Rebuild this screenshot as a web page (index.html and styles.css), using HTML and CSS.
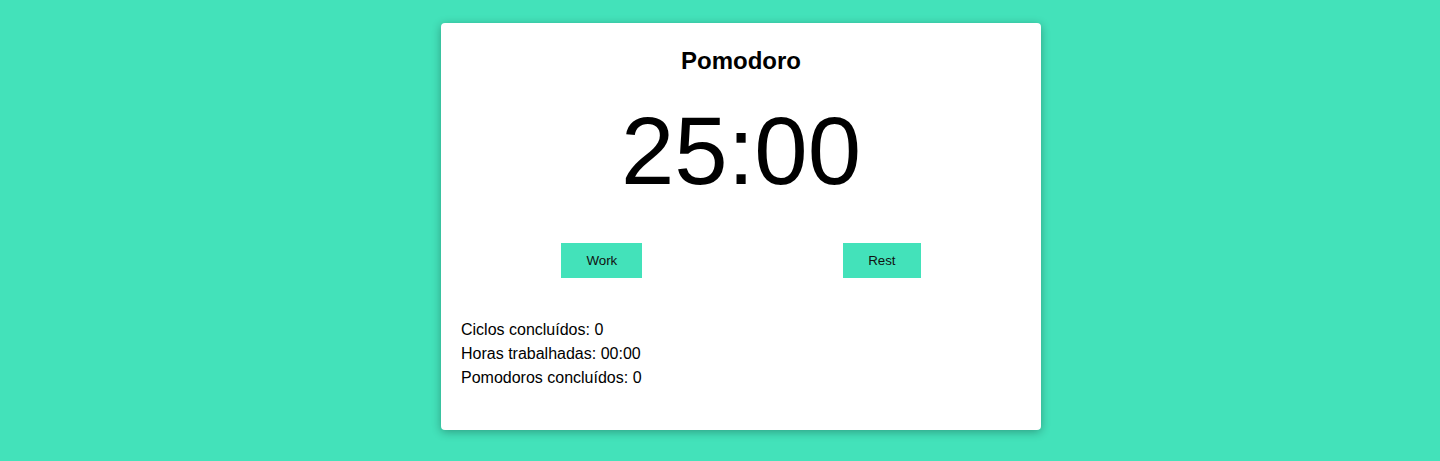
FILE: index.html
```html
<!DOCTYPE html>
<html lang="pt">
<head>
<meta charset="utf-8">
<title>Pomodoro</title>
<link rel="stylesheet" href="styles.css">
</head>
<body>
<main class="card">
  <h1 class="title">Pomodoro</h1>
  <div class="timer">25:00</div>
  <div class="controls">
    <button class="btn">Work</button>
    <button class="btn">Rest</button>
  </div>
  <div class="stats">
    <p>Ciclos concluídos: 0</p>
    <p>Horas trabalhadas: 00:00</p>
    <p>Pomodoros concluídos: 0</p>
  </div>
</main>
</body>
</html>
```

FILE: styles.css
```css
html, body {
  margin: 0;
  padding: 0;
}
body {
  box-sizing: border-box;
  background: #43e2ba;
  font-family: "Liberation Sans", Arial, sans-serif;
  color: #000;
  min-height: 461px;
  padding-left: 42px;
  display: flex;
  justify-content: center;
  align-items: flex-start;
}
.card {
  box-sizing: border-box;
  width: 600px;
  margin-top: 23px;
  padding: 20px 20px 40px;
  background: #fff;
  border-radius: 4px;
  box-shadow: 0 2px 10px rgba(0, 0, 0, 0.3);
  display: flex;
  flex-direction: column;
}
.title {
  margin: 4px 0 0;
  font-size: 24px;
  font-weight: bold;
  text-align: center;
  line-height: 27px;
}
.timer {
  margin-top: 23px;
  font-size: 96px;
  line-height: 107px;
  text-align: center;
}
.controls {
  margin-top: 39px;
  display: flex;
  justify-content: space-around;
}
.btn {
  height: 35px;
  padding: 0 25px;
  border: none;
  background: #43e2ba;
  color: #111;
  font-family: "Liberation Sans", Arial, sans-serif;
  font-size: 13.333px;
}
.stats {
  margin-top: 40px;
  font-size: 16px;
  line-height: 24px;
}
.stats p {
  margin: 0;
}
```
